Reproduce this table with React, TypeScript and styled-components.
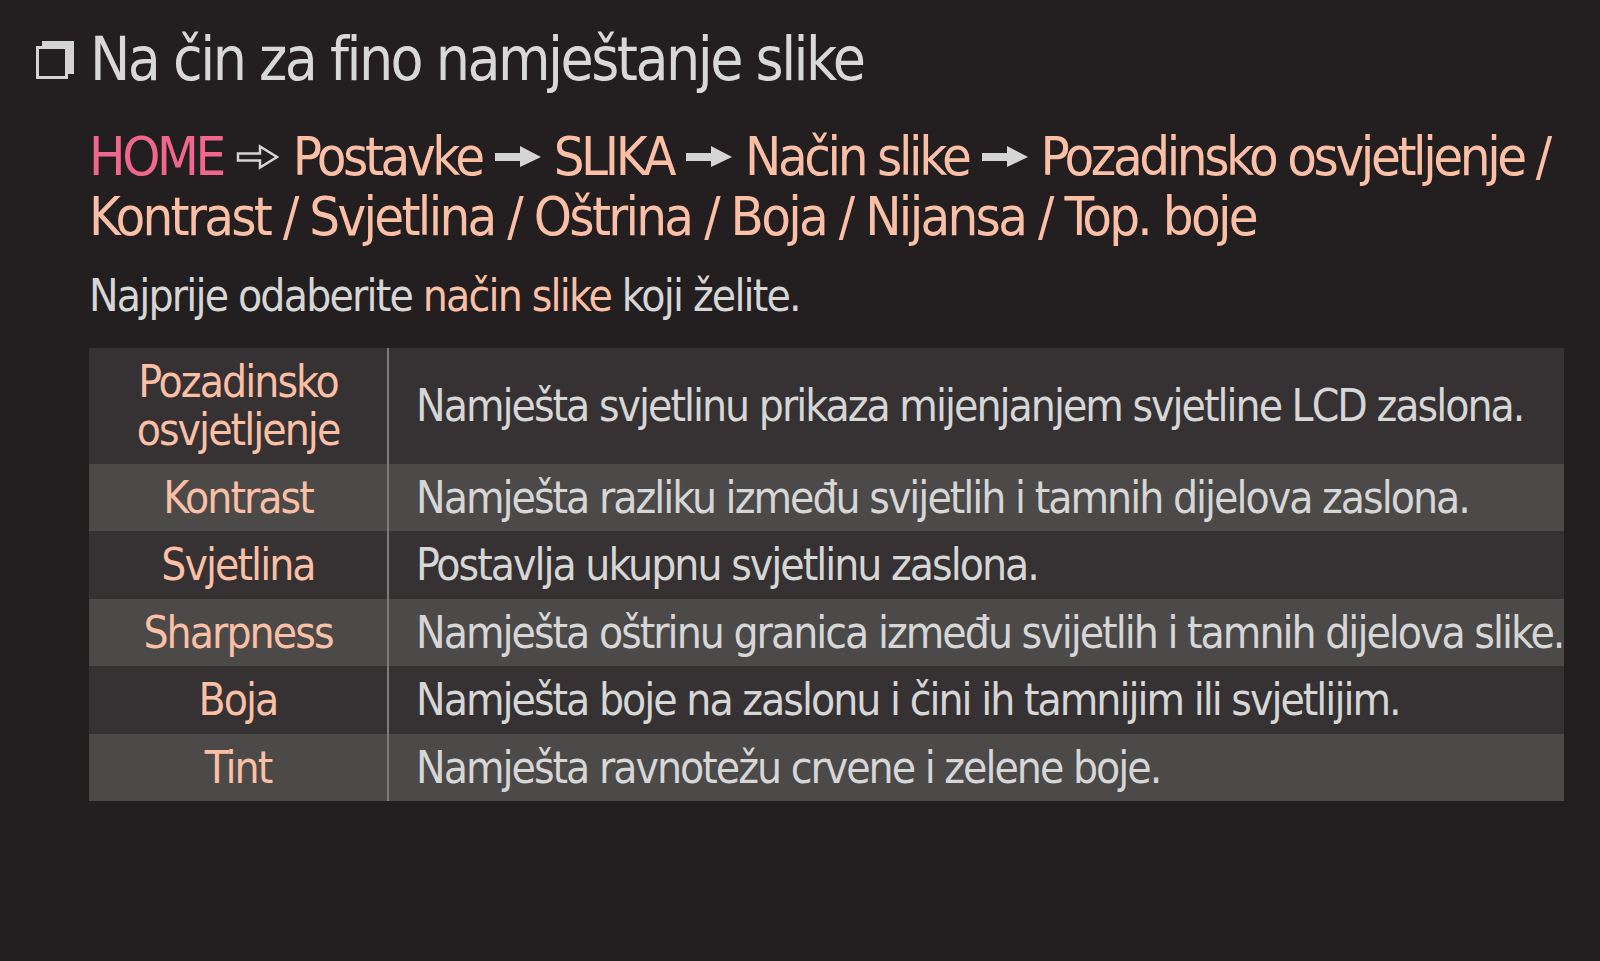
import React from 'react';
import styled, { createGlobalStyle } from 'styled-components';

const GlobalStyle = createGlobalStyle`
  html, body {
    margin: 0;
    padding: 0;
    background: #231f20;
  }
  body {
    font-family: "DejaVu Sans Condensed", "Liberation Sans Narrow", "Liberation Sans", sans-serif;
    color: #d6d6d6;
  }
`;

const Page = styled.div`
  width: 1600px;
  height: 961px;
  box-sizing: border-box;
  padding: 24px 36px 0 36px;
  background: #231f20;
  overflow: hidden;
`;

const Heading = styled.h1`
  display: flex;
  align-items: center;
  gap: 16px;
  margin: 0;
  font-size: 60px;
  line-height: 70px;
  font-weight: 400;
  letter-spacing: -0.042em;
  color: #d8d8d8;
  white-space: nowrap;

  svg {
    flex-shrink: 0;
  }
`;

const Content = styled.div`
  padding-left: 53px;
  display: flex;
  flex-direction: column;
`;

const Breadcrumb = styled.div`
  margin-top: 33px;
  font-size: 54px;
  line-height: 60px;
  color: #fbbfa5;
`;

const CrumbLine = styled.div<{ $tight?: boolean }>`
  display: flex;
  align-items: center;
  gap: 13px;
  white-space: nowrap;
  letter-spacing: ${({ $tight }) => ($tight ? '-0.063em' : '-0.05em')};

  svg {
    flex-shrink: 0;
  }
`;

const Home = styled.span`
  color: #f0668c;
`;

const Intro = styled.p`
  margin: 19px 0 0 0;
  font-size: 44px;
  line-height: 60px;
  letter-spacing: -0.041em;
  color: #d6d6d6;
  white-space: nowrap;
`;

const Accent = styled.span`
  color: #fbbfa5;
`;

const Table = styled.div`
  margin-top: 22px;
  width: 1475px;
  display: grid;
  grid-template-columns: 298px 1fr;
`;

const Label = styled.div<{ $alt?: boolean }>`
  background: ${({ $alt }) => ($alt ? '#4c4a49' : '#363233')};
  color: #fbbfa5;
  font-size: 44px;
  line-height: 48px;
  letter-spacing: -0.044em;
  padding: 10px 0 9.5px;
  text-align: center;
  display: flex;
  align-items: center;
  justify-content: center;
`;

const Desc = styled.div<{ $alt?: boolean }>`
  background: ${({ $alt }) => ($alt ? '#4c4a49' : '#363233')};
  border-left: 2px solid #7d7a7a;
  color: #d6d6d6;
  font-size: 44px;
  line-height: 48px;
  letter-spacing: -0.045em;
  padding: 10px 0 9.5px 27px;
  display: flex;
  align-items: center;
  white-space: nowrap;
`;

const BoxIcon = () => (
  <svg width="38" height="40" viewBox="0 0 38 40">
    <rect x="6" y="2" width="32" height="33" fill="#d4d4d4" />
    <rect x="0" y="7" width="32" height="33" fill="#231f20" />
    <rect x="1.5" y="8.5" width="29" height="30" fill="none" stroke="#d4d4d4" strokeWidth="3" />
  </svg>
);

const HollowArrow = () => (
  <svg width="44" height="26" viewBox="0 0 44 26">
    <path
      d="M2 9.5 H24 V2.5 L41 13 L24 23.5 V16.5 H2 Z"
      fill="none"
      stroke="#d4d4d4"
      strokeWidth="2.5"
      strokeLinejoin="miter"
    />
  </svg>
);

const SolidArrow = () => (
  <svg width="46" height="24" viewBox="0 0 46 24">
    <path d="M0 8 H25 V1 L46 12 L25 22 V16 H0 Z" fill="#d4d4d4" />
  </svg>
);

const rows = [
  { label: ['Pozadinsko', 'osvjetljenje'], text: 'Namješta svjetlinu prikaza mijenjanjem svjetline LCD zaslona.' },
  { label: ['Kontrast'], text: 'Namješta razliku između svijetlih i tamnih dijelova zaslona.' },
  { label: ['Svjetlina'], text: 'Postavlja ukupnu svjetlinu zaslona.' },
  { label: ['Sharpness'], text: 'Namješta oštrinu granica između svijetlih i tamnih dijelova slike.' },
  { label: ['Boja'], text: 'Namješta boje na zaslonu i čini ih tamnijim ili svjetlijim.' },
  { label: ['Tint'], text: 'Namješta ravnotežu crvene i zelene boje.' },
];

const App: React.FC = () => {
  return (
    <>
      <GlobalStyle />
      <Page>
        <Heading>
          <BoxIcon />
          Na čin za fino namještanje slike
        </Heading>
        <Content>
          <Breadcrumb>
            <CrumbLine $tight>
              <Home>HOME</Home>
              <HollowArrow />
              <span>Postavke</span>
              <SolidArrow />
              <span>SLIKA</span>
              <SolidArrow />
              <span>Način slike</span>
              <SolidArrow />
              <span>Pozadinsko osvjetljenje /</span>
            </CrumbLine>
            <CrumbLine>Kontrast / Svjetlina / Oštrina / Boja / Nijansa / Top. boje</CrumbLine>
          </Breadcrumb>
          <Intro>
            Najprije odaberite <Accent>način slike</Accent> koji želite.
          </Intro>
          <Table>
            {rows.map((row, i) => (
              <React.Fragment key={row.text}>
                <Label $alt={i % 2 === 1}>
                  {row.label.map((l) => (
                    <React.Fragment key={l}>
                      {l}
                      <br />
                    </React.Fragment>
                  ))}
                </Label>
                <Desc $alt={i % 2 === 1}>{row.text}</Desc>
              </React.Fragment>
            ))}
          </Table>
        </Content>
      </Page>
    </>
  );
};

export default App;
